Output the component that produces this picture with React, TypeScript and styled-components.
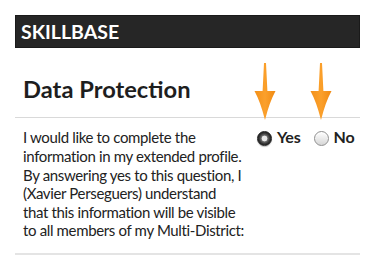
import React from "react";
import styled, { createGlobalStyle } from "styled-components";

const GlobalStyle = createGlobalStyle`
  html, body {
    margin: 0;
    padding: 0;
    background: #ffffff;
  }
  body {
    font-family: Lato, "Open Sans", Arial, sans-serif;
    color: #222222;
  }
`;

const Page = styled.div`
  width: 375px;
  padding: 15px 15px 0;
  box-sizing: border-box;
`;

const TitleBar = styled.div`
  height: 33px;
  background: #262626;
  border: 1px solid #1a1a1a;
  box-sizing: border-box;
  padding-left: 5px;
  color: #ffffff;
  font-size: 19.5px;
  font-weight: 700;
  line-height: 31px;
`;

const Heading = styled.h2`
  margin: 27px 0 0;
  padding: 0 0 14px 8px;
  font-size: 23.7px;
  font-weight: 700;
  line-height: 1.2;
  color: #1e1e1e;
  border-bottom: 1px solid #d9d9d9;
`;

const QuestionRow = styled.div`
  display: grid;
  grid-template-columns: 234px 1fr;
  column-gap: 0;
  padding: 10px 0 13px 8px;
  border-bottom: 2px solid #e4e4e4;
`;

const Question = styled.p`
  margin: 0;
  font-size: 15px;
  line-height: 18.6px;
  letter-spacing: -0.35px;
  white-space: nowrap;
  color: #222222;
`;

const Choices = styled.div`
  display: flex;
  align-items: flex-start;
  gap: 13px;
`;

const Choice = styled.label`
  position: relative;
  display: flex;
  align-items: flex-start;
  gap: 5px;
  font-size: 16px;
  font-weight: 700;
  line-height: 18.6px;
  letter-spacing: -0.2px;
  color: #222222;
`;

const Dot = styled.span<{ $checked: boolean }>`
  position: relative;
  width: 15px;
  height: 15px;
  margin-top: 3px;
  border-radius: 50%;
  box-sizing: border-box;
  border: 1px solid ${(p) => (p.$checked ? "#1c1c1c" : "#8f8f8f")};
  background: ${(p) =>
    p.$checked
      ? "radial-gradient(circle at 50% 50%, #e8e8e8 0 2.6px, #6e6e6e 3.2px, #333 5.4px, #1e1e1e 7.5px)"
      : "linear-gradient(#ffffff, #d6d6d6)"};
  box-shadow: ${(p) =>
    p.$checked ? "0 1px 1px rgba(0,0,0,0.25)" : "inset 0 1px 1px rgba(255,255,255,0.8)"};
`;

const Pointer = styled.svg`
  position: absolute;
  left: -3.5px;
  bottom: calc(100% + 8px);
`;

const Arrow = () => (
  <Pointer width="22" height="57" viewBox="0 0 22 57">
    <defs>
      <linearGradient id="arrowFill" x1="0" y1="0" x2="1" y2="0">
        <stop offset="0" stopColor="#f39019" />
        <stop offset="0.5" stopColor="#fba02b" />
        <stop offset="1" stopColor="#f08a12" />
      </linearGradient>
    </defs>
    <path
      d="M10 0 L12 0 L13.4 28 L21.5 28 Q15.5 39 11 57 Q6.5 39 0.5 28 L8.6 28 Z"
      fill="url(#arrowFill)"
    />
  </Pointer>
);

const Radio = ({ label, checked }: { label: string; checked: boolean }) => (
  <Choice>
    <Arrow />
    <Dot $checked={checked} />
    {label}
  </Choice>
);

const App: React.FC = () => {
  return (
    <>
      <GlobalStyle />
      <Page>
        <TitleBar>SKILLBASE</TitleBar>
        <Heading>Data Protection</Heading>
        <QuestionRow>
          <Question>
            I would like to complete the
            <br />
            information in my extended profile.
            <br />
            By answering yes to this question, I
            <br />
            (Xavier Perseguers) understand
            <br />
            that this information will be visible
            <br />
            to all members of my Multi-District:
          </Question>
          <Choices>
            <Radio label="Yes" checked />
            <Radio label="No" checked={false} />
          </Choices>
        </QuestionRow>
      </Page>
    </>
  );
};

export default App;
